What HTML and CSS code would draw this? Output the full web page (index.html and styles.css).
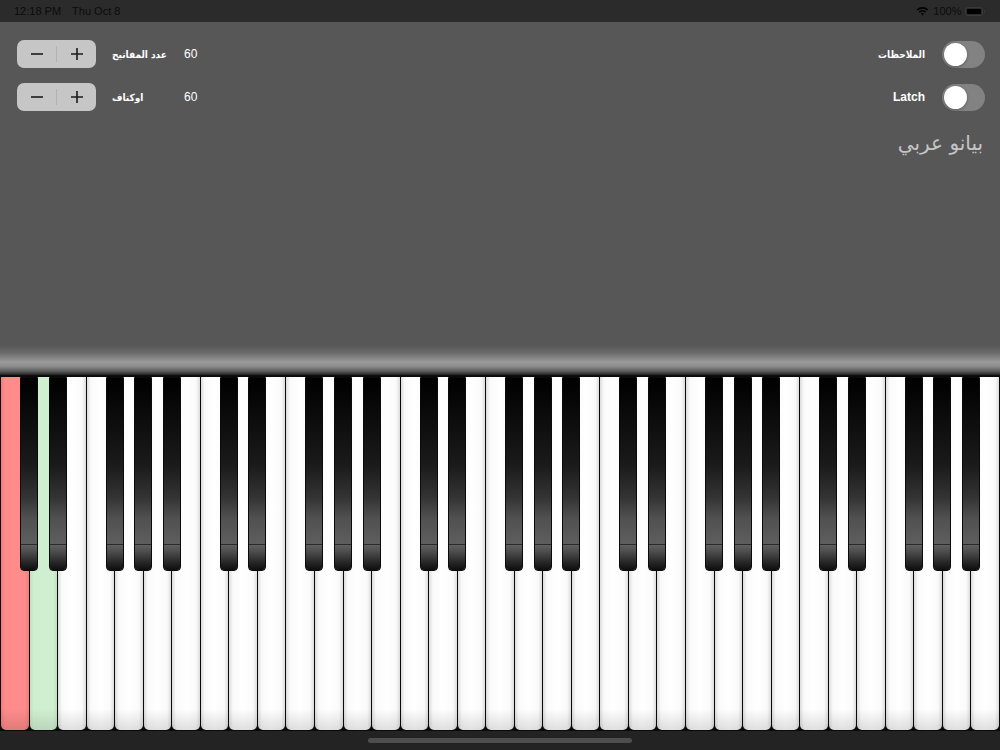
FILE: index.html
```html
<!DOCTYPE html>
<html lang="ar">
<head>
<meta charset="utf-8">
<link rel="stylesheet" href="styles.css">
</head>
<body>
<div class="app">
  <div class="status">
    <div class="status-left"><span>12:18 PM</span><span>Thu Oct 8</span></div>
    <div class="status-right">
      <svg class="wifi" width="13" height="10" viewBox="0 0 13 10">
        <path d="M0.6 3.4 A8.5 8.5 0 0 1 12.4 3.4 L11.2 4.6 A6.8 6.8 0 0 0 1.8 4.6 Z" fill="#000"/>
        <path d="M2.7 5.5 A5.5 5.5 0 0 1 10.3 5.5 L9.1 6.7 A3.8 3.8 0 0 0 3.9 6.7 Z" fill="#000"/>
        <path d="M4.9 7.7 A2.3 2.3 0 0 1 8.1 7.7 L6.5 9.4 Z" fill="#000"/>
      </svg>
      <span class="pct">100%</span>
      <div class="battery"><div class="battery-fill"></div></div><div class="battery-nub"></div>
    </div>
  </div>

  <div class="main">
    <div class="left">
      <div class="row">
        <div class="stepper">
          <span class="st-btn"><svg width="14" height="14" viewBox="0 0 14 14"><path d="M1 7H13" stroke="#1c1c1c" stroke-width="1.6"/></svg></span>
          <span class="st-div"></span>
          <span class="st-btn"><svg width="14" height="14" viewBox="0 0 14 14"><path d="M1 7H13M7 1V13" stroke="#1c1c1c" stroke-width="1.6"/></svg></span>
        </div>
        <span class="label" dir="rtl">عدد المفاتيح</span>
        <span class="num">60</span>
      </div>
      <div class="row">
        <div class="stepper">
          <span class="st-btn"><svg width="14" height="14" viewBox="0 0 14 14"><path d="M1 7H13" stroke="#1c1c1c" stroke-width="1.6"/></svg></span>
          <span class="st-div"></span>
          <span class="st-btn"><svg width="14" height="14" viewBox="0 0 14 14"><path d="M1 7H13M7 1V13" stroke="#1c1c1c" stroke-width="1.6"/></svg></span>
        </div>
        <span class="label" dir="rtl">اوكتاف</span>
        <span class="num">60</span>
      </div>
    </div>
    <div class="right">
      <div class="trow"><span class="tlabel ar" dir="rtl">الملاحظات</span><div class="toggle"><div class="knob"></div></div></div>
      <div class="trow"><span class="tlabel">Latch</span><div class="toggle"><div class="knob"></div></div></div>
      <div class="title" dir="rtl">بيانو عربي</div>
    </div>
  </div>

  <div class="rail"></div>
  <div class="keyboard" id="kb"></div>
  <div class="homebar"><div class="indicator"></div></div>
</div>
<script src="script.js"></script>
</body>
</html>
```

FILE: styles.css
```css
* { box-sizing: border-box; margin: 0; padding: 0; }
html, body { width: 1000px; height: 750px; overflow: hidden; background: #575757; }
body { font-family: "Liberation Sans", Arial, sans-serif; }

.app { width: 1000px; height: 750px; display: flex; flex-direction: column; }

.status {
  height: 22px; background: #2b2b2b; color: #0c0c0c;
  display: flex; justify-content: space-between; align-items: center;
  padding: 0 15px 0 14px; font-size: 11px;
}
.status-left { display: flex; gap: 11px; }
.status-right { display: flex; align-items: center; }
.wifi { margin-right: 4px; }
.pct { margin-right: 3px; }
.battery {
  width: 18px; height: 9px; border: 1px solid #3a3a3a; border-radius: 2.5px; padding: 1px;
}
.battery-fill { width: 100%; height: 100%; background: #000; border-radius: 1px; }
.battery-nub { width: 1.5px; height: 3px; background: #3a3a3a; margin-left: 1px; border-radius: 0 1px 1px 0; }

.main {
  height: 323px; background: #575757;
  display: flex; justify-content: space-between; align-items: flex-start;
  padding: 18px 15px 0 17px;
}
.left { display: flex; flex-direction: column; gap: 15px; }
.row { display: flex; align-items: center; height: 28px; }
.stepper {
  width: 79px; height: 28px; background: #c6c6c6; border-radius: 7px;
  display: flex; align-items: center;
}
.st-btn { flex: 1; display: flex; justify-content: center; align-items: center; height: 28px; }
.st-div { width: 1px; height: 16px; background: #b2b2b2; }
.label {
  width: 72px; margin-left: 16px; text-align: left; color: #fff; font-weight: bold;
  font-size: 10px; font-family: "DejaVu Sans", sans-serif; font-stretch: condensed;
}
.num { color: #fff; font-size: 12px; }

.right { display: flex; flex-direction: column; align-items: flex-end; gap: 15px; }
.trow { display: flex; align-items: center; gap: 17px; height: 28px; }
.tlabel { color: #fff; font-weight: bold; font-size: 12px; font-family: "Liberation Sans", Arial, sans-serif; }
.tlabel.ar { font-size: 10px; font-family: "DejaVu Sans", sans-serif; font-stretch: condensed; }
.toggle {
  width: 43px; height: 27px; border-radius: 14px; background: #828282; padding: 2px;
}
.knob {
  width: 23px; height: 23px; border-radius: 50%; background: #fff;
  box-shadow: 0 1px 3px rgba(0,0,0,0.3);
}
.title {
  color: #c4c4c4; font-size: 20px; font-family: "DejaVu Sans", sans-serif;
  margin-top: 5px; margin-right: 2px;
}

.rail {
  height: 31px;
  background: linear-gradient(to bottom, #575757 0%, #6a6a6a 25%, #9a9a9a 55%, #8a8a8a 70%, #5a5a5a 85%, #2a2a2a 95%, #000 100%);
}

.keyboard {
  height: 355px; background: #0a0a0a; padding: 1px 0 1px 1px;
  display: grid; grid-template-columns: repeat(70, 1fr); grid-template-rows: 1fr;
}
.white {
  grid-row: 1; margin-right: 1px; border-radius: 0 0 5px 5px;
  background:
    linear-gradient(to bottom, rgba(0,0,0,0) 94%, rgba(0,0,0,0.12) 100%),
    linear-gradient(to right, #dcdcdc 0%, #fafafa 14%, #fff 50%, #fafafa 86%, #dcdcdc 100%);
}
.white.red {
  background:
    linear-gradient(to bottom, rgba(0,0,0,0) 94%, rgba(0,0,0,0.12) 100%),
    linear-gradient(to right, #f07c7c 0%, #ff8b8b 14%, #ff8b8b 86%, #f07c7c 100%);
}
.white.green {
  background:
    linear-gradient(to bottom, rgba(0,0,0,0) 94%, rgba(0,0,0,0.1) 100%),
    linear-gradient(to right, #c0e0c0 0%, #d0eed0 14%, #d0eed0 86%, #c0e0c0 100%);
}
.black {
  grid-row: 1; justify-self: center; align-self: start; z-index: 1;
  width: 18px; height: 194px; margin-left: -1px;
  border: 1px solid #0a0a0a; border-radius: 0 0 4px 4px;
  display: flex; flex-direction: column; justify-content: flex-end;
  background: linear-gradient(to bottom, #000 0%, #1a1a1a 45%, #333 62%, #505050 73%, #5e5e5e 86%);
}
.black-tip {
  height: 26px; border-top: 1px solid #2a2a2a; border-radius: 0 0 3px 3px;
  background: linear-gradient(to bottom, #606060 0%, #4a4a4a 30%, #262626 70%, #0e0e0e 100%);
}

.homebar { height: 19px; background: #232323; display: flex; justify-content: center; padding-top: 7px; }
.indicator { width: 264px; height: 5px; border-radius: 3px; background: #4e4e4e; }
```

FILE: script.js
```js
const kb = document.getElementById('kb');
for (let j = 0; j < 35; j++) {
  const w = document.createElement('div');
  w.className = 'white' + (j === 0 ? ' red' : j === 1 ? ' green' : '');
  w.style.gridColumn = (2 * j + 1) + ' / span 2';
  kb.appendChild(w);
}
for (let o = 0; o < 5; o++) {
  [1, 2, 4, 5, 6].forEach(function (b) {
    const k = 7 * o + b;
    const d = document.createElement('div');
    d.className = 'black';
    d.style.gridColumn = (2 * k) + ' / span 2';
    const tip = document.createElement('div');
    tip.className = 'black-tip';
    d.appendChild(tip);
    kb.appendChild(d);
  });
}
```
